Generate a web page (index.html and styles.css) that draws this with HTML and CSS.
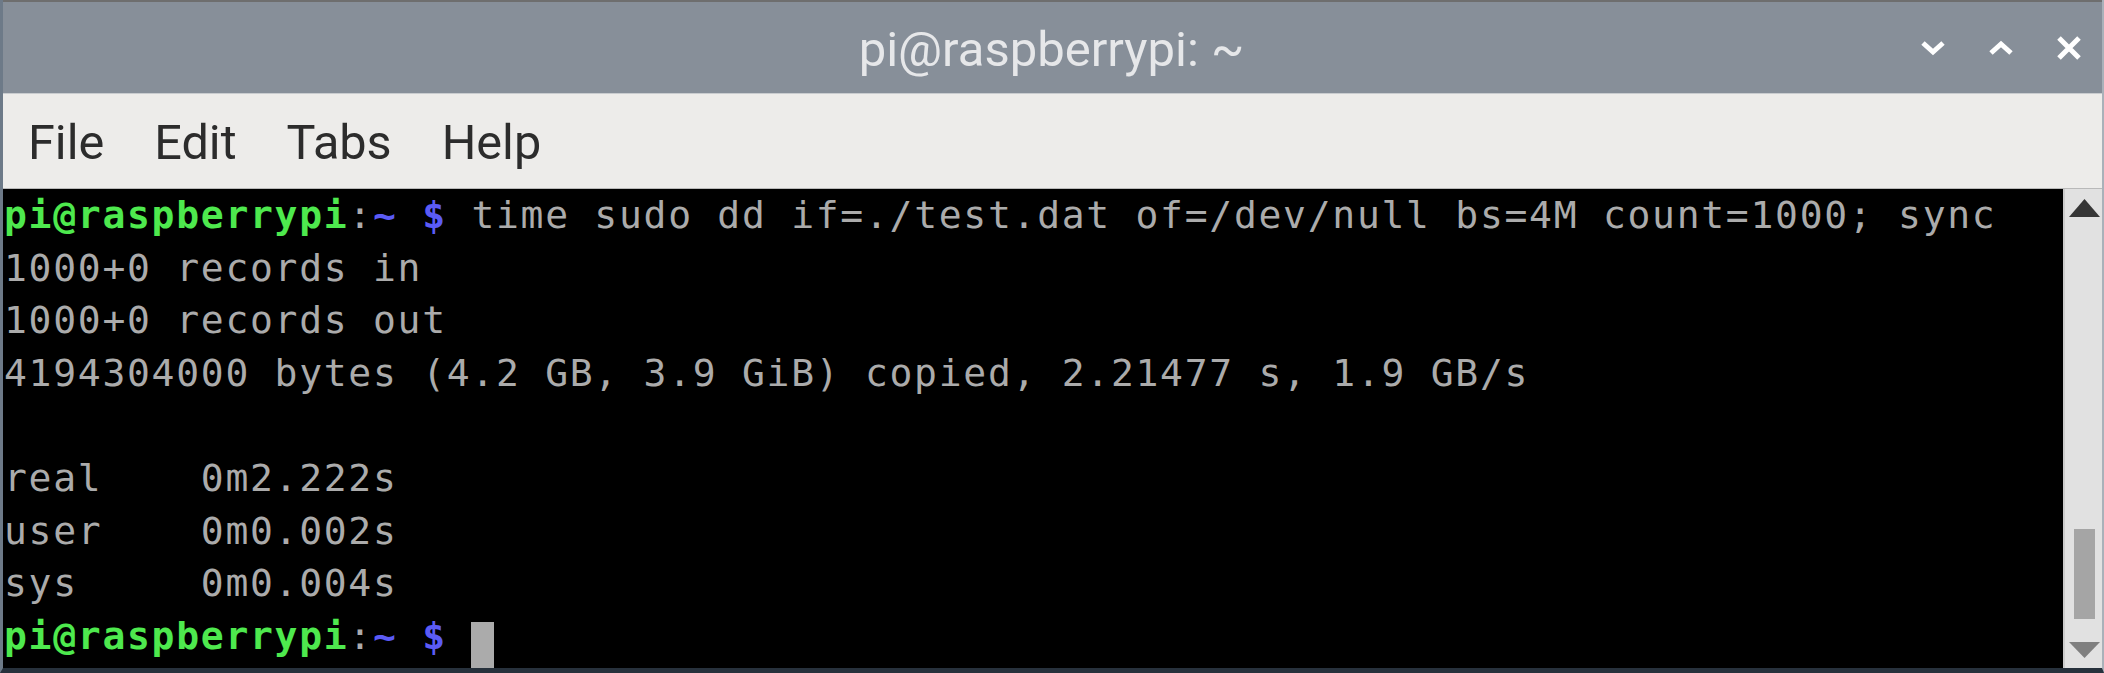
FILE: index.html
```html
<!DOCTYPE html>
<html lang="en">
<head>
	<meta charset="UTF-8">
	<title>pi@raspberrypi: ~</title>
	<link rel="stylesheet" href="styles.css">
</head>
<body>
	<div class="win">
		<div class="titlebar">
			<span class="title">pi@raspberrypi: ~</span>
			<div class="ctrls">
				<svg class="ctrl" width="26" height="18" viewBox="0 0 26 18"><path d="M3 4 L13 13 L23 4" fill="none" stroke="#fff" stroke-width="5" stroke-linejoin="miter"/></svg>
				<svg class="ctrl" width="26" height="18" viewBox="0 0 26 18"><path d="M3 14 L13 5 L23 14" fill="none" stroke="#fff" stroke-width="5"/></svg>
				<svg class="ctrl close" width="26" height="26" viewBox="0 0 26 26"><path d="M3 3 L23 23 M23 3 L3 23" fill="none" stroke="#fff" stroke-width="5"/></svg>
			</div>
		</div>
		<div class="menubar">
			<span class="menu">File</span>
			<span class="menu">Edit</span>
			<span class="menu">Tabs</span>
			<span class="menu">Help</span>
		</div>
		<div class="body">
<pre class="term"><b class="g">pi@raspberrypi</b>:<b class="bl">~ $</b> time sudo dd if=./test.dat of=/dev/null bs=4M count=1000; sync
1000+0 records in
1000+0 records out
4194304000 bytes (4.2 GB, 3.9 GiB) copied, 2.21477 s, 1.9 GB/s

real    0m2.222s
user    0m0.002s
sys     0m0.004s
<b class="g">pi@raspberrypi</b>:<b class="bl">~ $</b> <span class="cursor"> </span></pre>
			<div class="scroll">
				<svg width="31" height="18" viewBox="0 0 31 18"><path d="M15.5 0 L31 18 L0 18 Z" fill="#363636"/></svg>
				<div class="track"><div class="thumb"></div></div>
				<svg width="31" height="16" viewBox="0 0 31 16"><path d="M0 0 L31 0 L15.5 16 Z" fill="#7f7f7f"/></svg>
			</div>
		</div>
	</div>
</body>
</html>
```

FILE: styles.css
```css
*{margin:0;padding:0;box-sizing:border-box;}
html,body{width:2104px;height:673px;overflow:hidden;background:#000;}
.win{width:2104px;height:673px;display:flex;flex-direction:column;border-left:3px solid #6d7a88;border-right:2px solid #a9b1b9;border-bottom:5px solid #27313c;}
.titlebar{height:94px;background:#878f99;border-top:2px solid #6e6e6e;border-bottom:1px solid #c9cccf;display:flex;align-items:center;justify-content:center;position:relative;}
.title{font-family:Roboto,"Noto Sans",sans-serif;font-size:49px;color:#e6e7e9;margin-top:4px;margin-right:2px;}
.ctrls{position:absolute;right:20px;top:33px;display:flex;gap:42px;align-items:center;}
.ctrl{display:block;}
.menubar{height:95px;background:#edecea;border-bottom:1px solid #b9b9b9;display:flex;align-items:center;padding-left:0;}
.menu{font-family:Roboto,"Noto Sans",sans-serif;font-size:48.6px;color:#2c2c2c;padding:0 25px;margin-top:2px;}
.body{flex:1;display:flex;min-height:0;}
.term{flex:1;background:#000;color:#ababab;font-family:"DejaVu Sans Mono",monospace;font-size:38px;letter-spacing:1.72px;line-height:52.6px;padding-left:1px;overflow:hidden;white-space:pre;}
.term b{font-weight:bold;}
.g{color:#4ee94e;}
.bl{color:#5b5bf5;}
.cursor{background:#ababab;display:inline-block;width:23px;height:50px;vertical-align:-12px;}
.scroll{width:39px;background:#e1e1e1;border-left:2px solid #cbcbcb;display:flex;flex-direction:column;align-items:center;padding:10px 0 10px 2px;}
.track{flex:1;width:100%;display:flex;flex-direction:column;justify-content:flex-end;padding:0 7px 23px 7px;}
.thumb{height:90px;background:#a5a5a5;}
```
